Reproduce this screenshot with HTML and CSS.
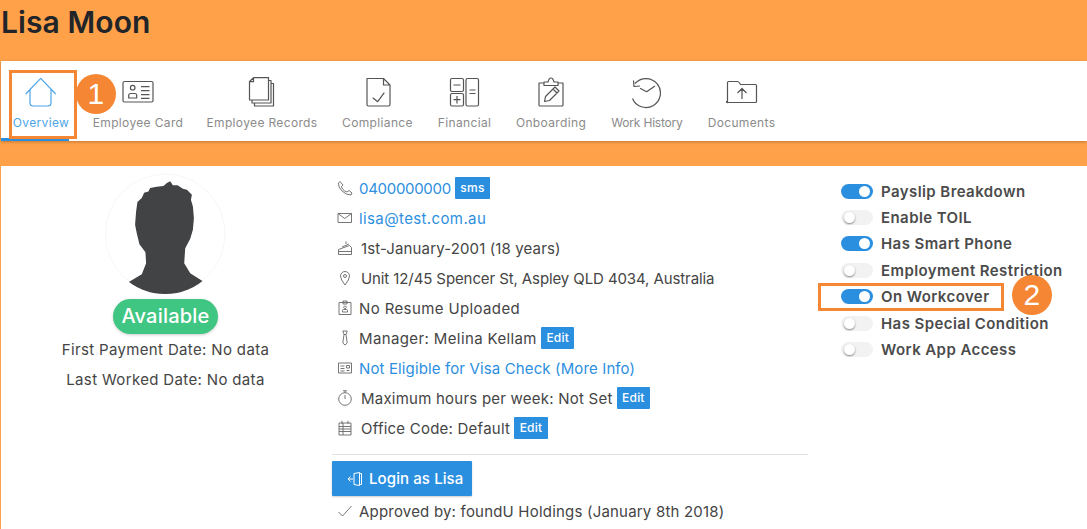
FILE: index.html
```html
<!DOCTYPE html>
<html lang="en">
<head>
<meta charset="utf-8">
<title>Lisa Moon</title>
<link rel="stylesheet" href="styles.css">
</head>
<body>
<header class="title"><h1>Lisa Moon</h1></header>
<nav class="tabs">
  <a class="tab active"><svg class="nav-ic" viewBox="0 0 32 32"><path d="M.7 17 15.7 1.3 30.7 17M5 12v14q0 3 3 3h15q3 0 3-3V12"/></svg><span>Overview</span></a>
  <a class="tab"><svg class="nav-ic" viewBox="0 0 32 32"><rect x="1" y="4.5" width="30" height="20.5" rx="1.5"/><circle cx="10.7" cy="10.7" r="2.3"/><path d="M6.7 21v-2.5q0-2 2-2h4q2 0 2 2V21zM19 9.700h8.500M19 13.700h8.500M19 17.700h8.500M19 21.300h8.500"/></svg><span>Employee Card</span></a>
  <a class="tab"><svg class="nav-ic" viewBox="0 0 32 32"><path d="M7.500.7h15v22.300h-19V4.500zM7.500.7v4h-4M22.500 3.500h2.500v22.500h-19V23M25 6.500h2.500v22.500h-19V26"/></svg><span>Employee Records</span></a>
  <a class="tab"><svg class="nav-ic" viewBox="0 0 32 32"><path d="M5 1.500h16.500L28 8v19.500q0 1.500-1.500 1.500h-20Q5 29 5 27.500zM21.500 1.500V8H28M10.700 20.700l5 4 6.600-9"/></svg><span>Compliance</span></a>
  <a class="tab"><svg class="nav-ic" viewBox="0 0 32 32"><rect x="1.500" y="1.500" width="13" height="13" rx="1.500"/><rect x="1.500" y="16.500" width="13" height="12.500" rx="1.500"/><rect x="17" y="1.500" width="12.500" height="27.500" rx="1.500"/><path d="M4.500 8h7M4.500 22.700h7M8 19v7.500M20.500 13h6M20.500 16.500h6"/></svg><span>Financial</span></a>
  <a class="tab"><svg class="nav-ic" viewBox="0 0 32 32"><path d="M9 6H4v22q0 1 1 1h22q1 0 1-1V6h-5M9 8.500V5h4q1-4 3-4t3 4h4v3.500zM9.500 24.500l1-5L20 10l4 4-9.500 9.500zM18 12l4 4"/></svg><span>Onboarding</span></a>
  <a class="tab"><svg class="nav-ic" viewBox="0 0 32 32"><path d="M4 6.500A14.500 14.500 0 1 1 1.500 21.500M2.500 3.500 3 9.500l6-.5M9 11.300l6.700 3.400 8.300-5.700"/></svg><span class="narrow">Work History</span></a>
  <a class="tab"><svg class="nav-ic" viewBox="0 0 32 32"><path d="M1.500 25.500V5.500Q1.500 4.500 2.500 4.500h9q1 0 2 1.500l1 1.500h15q1 0 1 1v16q0 1-1 1h-28q-1 0-1-1zM16 22V12M11.500 16 16 11.500 20.500 16"/></svg><span>Documents</span></a>
</nav>
<main class="panel">
  <section class="profile">
    <svg class="avatar" viewBox="315 25 362 362">
      <defs><clipPath id="round"><circle cx="495" cy="207" r="180"/></clipPath></defs>
      <circle cx="495" cy="207" r="179" class="avatar-ring"/>
      <path clip-path="url(#round)" class="avatar-fig" d="M380 355 425 328 438 295 436 262 418 238 410 205 405 180 408 140 412 112 425 100 432 84 445 80 450 70 470 66 490 64 500 55 510 50 518 62 532 62 548 72 560 75 575 90 572 105 578 125 581 160 578 195 570 222 555 250 552 295 570 325 610 350 610 400 380 400Z"/>
    </svg>
    <div class="status">Available</div>
    <p class="meta">First Payment Date: No data</p>
    <p class="meta last">Last Worked Date: No data</p>
  </section>
  <section class="details">
    <div class="row"><svg class="ic" viewBox="0 0 16 16"><path d="M3 1.500 1.500 3q-.5 4 3.500 8t9 4l1-2-3-2.500-2 1.500Q7 11 6 9.500 4.500 8 4.500 6.500L6 5z"/></svg><a class="link digits">0400000000</a><span class="badge">sms</span></div>
    <div class="row"><svg class="ic" viewBox="0 0 16 16"><path d="M1 3.500h13.500v9H1zM1 3.500l6.700 5 6.800-5"/></svg><a class="link roomy">lisa@test.com.au</a></div>
    <div class="row wide"><svg class="ic" viewBox="0 0 16 16"><path d="M1.500 14.500v-5l11-4 2 2v7zM1.500 11.500h13M5 7l7-3M9 4V1.500"/></svg><span class="snug">1st-January-2001 (18 years)</span></div>
    <div class="row wide"><svg class="ic" viewBox="0 0 16 16"><path d="M8 15Q3.500 9.500 3.500 6a4.500 4.500 0 0 1 9 0Q12.500 9.500 8 15z"/><circle cx="8" cy="6" r="1.500"/></svg><span class="tight">Unit 12/45 Spencer St, Aspley QLD 4034, Australia</span></div>
    <div class="row"><svg class="ic" viewBox="0 0 16 16"><path d="M2 2.500h12v12H2zM6 1h4v3H6zM5.500 12v-1.500q0-1 1-1h3q1 0 1 1V12zM8 6a1.300 1.300 0 1 0 .01 0"/></svg><span class="roomy">No Resume Uploaded</span></div>
    <div class="row"><svg class="ic" viewBox="0 0 16 16"><path d="M5.800 1h4.400L9 4.500H7zM7 4.500 5.800 13 8 15l2.200-2L9 4.500"/></svg><span class="roomy">Manager: Melina Kellam</span><span class="badge">Edit</span></div>
    <div class="row"><svg class="ic" viewBox="0 0 16 16"><path d="M1.500 3h13v10h-13zM3.500 6h4M3.500 8.500h4M3.500 11h4M9.500 5.500h3v2.500h-3zM9.500 10.500h3"/></svg><a class="link snug">Not Eligible for Visa Check (More Info)</a></div>
    <div class="row wide"><svg class="ic" viewBox="0 0 16 16"><circle cx="8" cy="9" r="6.300"/><path d="M8 2.700V0.800M6 .8h4M8 5v4"/></svg><span>Maximum hours per week: Not Set</span><span class="badge">Edit</span></div>
    <div class="row wide"><svg class="ic" viewBox="0 0 16 16"><path d="M2 3h12v12H2zM2 6.500h12M2 9h12M2 11.500h12M6 3v12M5 .8v3M11 .8v3"/></svg><span>Office Code: Default</span><span class="badge">Edit</span></div>
    <hr class="rule">
    <button class="login"><svg class="login-ic" viewBox="0 0 16 16"><path d="M7 2.500 12.500 1.500v13L7 13.500zM12.500 2.500h2v11h-2M1 8h5M3.500 5.500 1 8l2.500 2.500"/></svg>Login as Lisa</button>
    <div class="row"><svg class="ic" viewBox="0 0 16 16"><path d="M1.500 9 5.500 13 14.500 3"/></svg><span class="fit">Approved by: foundU Holdings (January 8th 2018)</span></div>
  </section>
  <section class="flags">
    <div class="flag"><i class="toggle on"></i>Payslip Breakdown</div>
    <div class="flag"><i class="toggle"></i>Enable TOIL</div>
    <div class="flag"><i class="toggle on"></i>Has Smart Phone</div>
    <div class="flag"><i class="toggle"></i>Employment Restriction</div>
    <div class="flag"><i class="toggle on"></i>On Workcover</div>
    <div class="flag"><i class="toggle"></i>Has Special Condition</div>
    <div class="flag"><i class="toggle"></i>Work App Access</div>
  </section>
</main>
<div class="mark-box box-one"></div>
<div class="mark-num num-one">1</div>
<div class="mark-box box-two"></div>
<div class="mark-num num-two">2</div>
</body>
</html>
```
FILE: styles.css
```css
* { box-sizing: border-box; }
html, body { margin: 0; height: 529px; overflow: hidden; }
body {
  position: relative;
  background: #ffa149;
  font-family: Inter, "Open Sans", sans-serif;
  font-size: 15px;
  letter-spacing: .23px;
  color: #454545;
}
.title { height: 61px; padding: 3px 0 0 1px; }
h1 { margin: 0; font-size: 30px; line-height: 38px; font-weight: 600; color: #212529; letter-spacing: .1px; }
.tabs {
  display: grid;
  grid-template-columns: 80px 114px 134px 97px 77px 96px 96px 93px;
  height: 80px;
  margin-left: 1px;
  padding-top: 16px;
  background: #fff;
  box-shadow: 0 1px 3px rgba(0,0,0,.25);
}
.tab {
  position: relative;
  display: flex;
  flex-direction: column;
  align-items: center;
  font-size: 12px;
  letter-spacing: .35px;
  line-height: 14px;
  color: #8b8b8b;
  white-space: nowrap;
}
.tab span { margin-top: 7px; }
.tab .narrow { letter-spacing: -.2px; }
.tab.active { color: #4ea5e8; }
.tab.active::after {
  content: "";
  position: absolute;
  left: 0;
  bottom: 0;
  width: 68px;
  height: 3px;
  background: #2b8fe0;
}
.nav-ic { width: 32px; height: 32px; fill: none; stroke: #555; stroke-width: 1.2; stroke-linejoin: round; }
.active .nav-ic { stroke: #4ea5e8; }
.panel {
  display: grid;
  grid-template-columns: 331px 509px 1fr;
  height: 363px;
  margin: 25px 0 0 1px;
  background: #fff;
}
.profile { display: flex; flex-direction: column; align-items: center; padding: 7px 2px 0 0; letter-spacing: .35px; }
.avatar { width: 121px; height: 121px; display: block; }
.avatar-ring { fill: #fff; stroke: #f1f1f1; stroke-width: 2; }
.avatar-fig { fill: #424345; }
.status {
  width: 105px;
  height: 35px;
  margin-top: 5px;
  border-radius: 18px;
  background: #3fc682;
  color: #fff;
  font-size: 20px;
  font-weight: 500;
  letter-spacing: .2px;
  line-height: 35px;
  text-align: center;
  box-shadow: 0 1px 3px rgba(0,0,0,.2);
}
.meta { margin: 6px 0 0; line-height: 20px; white-space: nowrap; }
.meta.last { margin-top: 10px; }
.details { padding-top: 7px; width: 476px; }
.row { display: flex; align-items: center; height: 30px; padding-left: 5px; white-space: nowrap; }
.ic { flex: none; width: 16px; height: 16px; margin-right: 6px; fill: none; stroke: #666; stroke-width: .9; stroke-linejoin: round; }
.wide .ic { margin-right: 8px; }
.link { color: #2d8fe0; }
.digits { letter-spacing: -.3px; }
.tight { letter-spacing: -.1px; }
.snug { letter-spacing: .13px; }
.fit { letter-spacing: .2px; }
.roomy { letter-spacing: .38px; }
.badge {
  height: 22px;
  margin-left: 4px;
  padding: 0 5.500px;
  border-radius: 1px;
  background: #2b8fe0;
  color: #fff;
  font-size: 12px;
  font-weight: 500;
  letter-spacing: .2px;
  line-height: 22px;
}
.rule { height: 1px; margin: 11px 0 6px; border: 0; background: #e3e3e3; }
.login {
  display: flex;
  align-items: center;
  width: 140px;
  height: 35px;
  padding: 0 0 0 15px;
  border: 0;
  border-radius: 1px;
  background: #2b8fe0;
  color: #fff;
  font: 500 15px Inter, "Open Sans", sans-serif;
  letter-spacing: .1px;
  box-shadow: 0 1px 2px rgba(0,0,0,.2);
}
.login-ic { width: 16px; height: 16px; margin-right: 6px; fill: none; stroke: #fff; stroke-width: 1; }
.flags { padding-top: 12px; }
.flag {
  display: flex;
  align-items: center;
  height: 26.400px;
  font-weight: 600;
  letter-spacing: .42px;
  color: #4b4b4b;
  white-space: nowrap;
}
.toggle {
  position: relative;
  width: 32px;
  height: 15px;
  margin-right: 8px;
  border-radius: 8px;
  background: #f2f2f2;
}
.toggle::after {
  content: "";
  position: absolute;
  top: 2px;
  left: 3px;
  width: 11px;
  height: 11px;
  border-radius: 50%;
  background: #fff;
  box-shadow: 0 1px 2px rgba(0,0,0,.45);
}
.toggle.on { background: #2b8fe0; }
.toggle.on::after { left: 18px; box-shadow: none; }
.mark-box { position: absolute; border: 3px solid #f58634; }
.box-one { left: 9px; top: 70px; width: 68px; height: 69px; }
.box-two { left: 818px; top: 283px; width: 186px; height: 28px; }
.mark-num {
  position: absolute;
  width: 40px;
  height: 40px;
  border-radius: 50%;
  background: #f58634;
  color: #fff;
  font: 30px/40px "Liberation Sans", sans-serif;
  text-align: center;
}
.num-one { left: 76px; top: 74px; }
.num-two { left: 1012px; top: 275px; }
```
